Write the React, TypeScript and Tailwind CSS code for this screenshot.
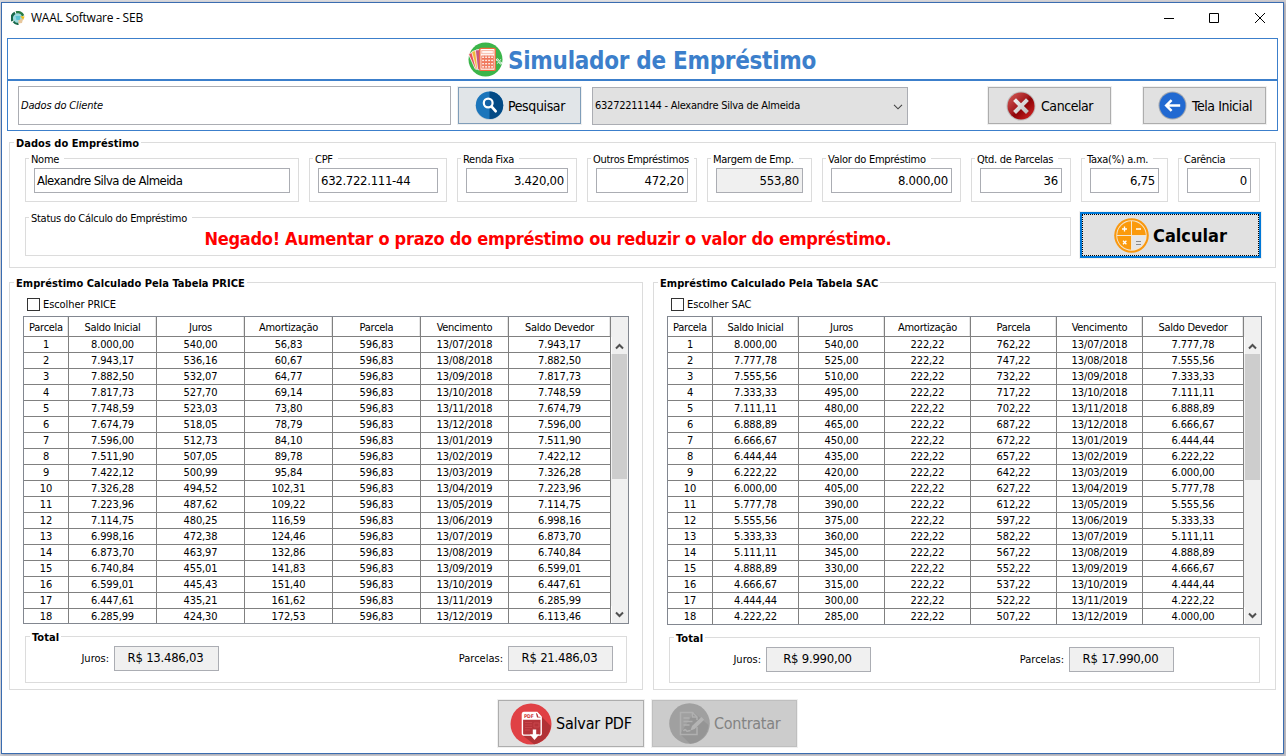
import type { ReactNode } from 'react';

type Row = string[];

const HEADERS = ['Parcela', 'Saldo Inicial', 'Juros', 'Amortização', 'Parcela', 'Vencimento', 'Saldo Devedor'];

const PRICE_BALANCES = [
  '8.000,00', '7.943,17', '7.882,50', '7.817,73', '7.748,59', '7.674,79', '7.596,00', '7.511,90', '7.422,12', '7.326,28',
  '7.223,96', '7.114,75', '6.998,16', '6.873,70', '6.740,84', '6.599,01', '6.447,61', '6.285,99', '6.113,46',
];
const PRICE_INTEREST = [
  '540,00', '536,16', '532,07', '527,70', '523,03', '518,05', '512,73', '507,05', '500,99',
  '494,52', '487,62', '480,25', '472,38', '463,97', '455,01', '445,43', '435,21', '424,30',
];
const PRICE_AMORTIZATION = [
  '56,83', '60,67', '64,77', '69,14', '73,80', '78,79', '84,10', '89,78', '95,84',
  '102,31', '109,22', '116,59', '124,46', '132,86', '141,83', '151,40', '161,62', '172,53',
];
const SAC_BALANCES = [
  '8.000,00', '7.777,78', '7.555,56', '7.333,33', '7.111,11', '6.888,89', '6.666,67', '6.444,44', '6.222,22', '6.000,00',
  '5.777,78', '5.555,56', '5.333,33', '5.111,11', '4.888,89', '4.666,67', '4.444,44', '4.222,22', '4.000,00',
];

function dueDate(index: number): string {
  const month = 6 + index;
  return `13/${String((month % 12) + 1).padStart(2, '0')}/${2018 + Math.floor(month / 12)}`;
}

const priceRows: Row[] = PRICE_INTEREST.map((interest, i) => [
  String(i + 1), PRICE_BALANCES[i], interest, PRICE_AMORTIZATION[i], '596,83', dueDate(i), PRICE_BALANCES[i + 1],
]);

const sacRows: Row[] = PRICE_INTEREST.map((_, i) => [
  String(i + 1), SAC_BALANCES[i], `${540 - 15 * i},00`, '222,22', `${762 - 15 * i},22`, dueDate(i), SAC_BALANCES[i + 1],
]);

function Group({ title, bold, className, children }: { title: string; bold?: boolean; className: string; children?: ReactNode }) {
  return (
    <div className={`relative shrink-0 border border-[#dcdcdc] ${className}`}>
      <span
        className={`absolute top-[-6px] bg-white px-[2px] text-[11px] leading-[14px] whitespace-nowrap ${
          bold ? 'left-[4px] font-bold tracking-[0.04px]' : 'left-[3px] pr-[5px] tracking-[-0.28px]'
        }`}
      >
        {title}
      </span>
      {children}
    </div>
  );
}

function Field({ title, value, className, left, disabled }: { title: string; value: string; className: string; left?: boolean; disabled?: boolean }) {
  return (
    <Group title={title} className={`h-[44px] px-[8px] pt-[9px] ${className}`}>
      <div
        className={`relative flex h-[25px] items-center border border-[#abadb3] text-[13px] whitespace-nowrap ${
          disabled ? 'bg-[#f0f0f0]' : 'bg-white'
        } ${left ? 'justify-start pl-[2px]' : 'justify-end pr-[3px] tracking-[-0.25px]'}`}
      >
        {value}
      </div>
    </Group>
  );
}

function ScrollBar({ thumb }: { thumb: string }) {
  return (
    <div className="flex w-[17px] shrink-0 flex-col items-center bg-[#f0f0f0]">
      <div className="h-[20px] w-full shrink-0" />
      <div className="flex h-[17px] w-full shrink-0 items-center justify-center border-l border-white pr-[2px] pt-px">
        <svg width="9" height="7" viewBox="0 0 9 7" fill="none" stroke="#505050" strokeWidth="2">
          <path d="M1 5.5 4.5 2 8 5.5" />
        </svg>
      </div>
      <div className={`w-[15px] shrink-0 bg-[#cdcdcd] ${thumb}`} />
      <div className="flex-1" />
      <div className="flex h-[17px] w-full shrink-0 items-center justify-center border-l border-white pr-[2px]">
        <svg width="9" height="7" viewBox="0 0 9 7" fill="none" stroke="#505050" strokeWidth="2">
          <path d="M1 1.5 4.5 5 8 1.5" />
        </svg>
      </div>
    </div>
  );
}

function LoanTable({ rows, columns, className, thumb }: { rows: Row[]; columns: string; className: string; thumb: string }) {
  return (
    <div className={`flex shrink-0 overflow-hidden border border-[#828790] text-[11px] ${className}`}>
      <div className="shrink-0">
        <div className={`grid h-[20px] ${columns}`}>
          {HEADERS.map((h, i) => (
            <div
              key={i}
              className="flex items-center justify-center border-r border-b border-[#808080] pt-[3px] leading-[16px] tracking-[-0.27px] whitespace-nowrap shadow-[inset_-1px_0_0_#e5e5e5]"
            >
              {h}
            </div>
          ))}
        </div>
        {rows.map((row) => (
          <div key={row[0]} className={`grid h-[16px] ${columns}`}>
            {row.map((cell, i) => (
              <div key={i} className="flex items-center justify-center border-r border-b border-[#808080] leading-[15px] tracking-[-0.12px]">
                {cell}
              </div>
            ))}
          </div>
        ))}
      </div>
      <ScrollBar thumb={thumb} />
    </div>
  );
}

function CheckBox({ label }: { label: string }) {
  return (
    <div className="ml-[17px] flex h-[13px] items-center gap-[3px] text-[11px] tracking-[-0.08px]">
      <span className="h-[13px] w-[13px] border border-[#333]" />
      <span className="leading-[13px]">{label}</span>
    </div>
  );
}

function TotalValue({ label, value, labelWidth }: { label: string; value: string; labelWidth: string }) {
  return (
    <>
      <span className={`pt-[2px] pr-[5px] text-right text-[11px] ${labelWidth}`}>{label}</span>
      <span className="flex h-[25px] w-[105px] shrink-0 items-center justify-center border border-[#abadb3] bg-[#f0f0f0] pr-[2px] pb-px text-[13px] tracking-[-0.25px] whitespace-nowrap">
        {value}
      </span>
    </>
  );
}

function Button({ className, icon, children }: { className: string; icon: ReactNode; children: ReactNode }) {
  return (
    <button className={`flex shrink-0 items-center border whitespace-nowrap shadow-[0_0_0_1px_#f0f0f0] ${className}`}>
      {icon}
      {children}
    </button>
  );
}

const AppIcon = () => (
  <svg width="14" height="14" viewBox="0 0 14 14">
    <circle cx="7" cy="7" r="5" fill="#9adbe0" />
    <path d="M1.4 10A6 6 0 0 1 4 1.8" fill="none" stroke="#17694a" strokeWidth="2.6" />
    <path d="M5 1.4c3-1 6 .6 7.2 3.4" fill="none" stroke="#2b7d45" strokeWidth="2.4" />
    <path d="M2.5 10.5c1.2 1.8 3 2.6 5 2.3" fill="none" stroke="#17694a" strokeWidth="2.2" />
    <path d="M9 5 13.6 5.4 12.2 9z" fill="#eebc1c" />
    <path d="M7.5 8.5 12 7.8 11 12 7.4 12.6z" fill="#e8c79c" />
    <path d="M4.5 5h5l-.8 4H5.4z" fill="#5cc5d2" />
  </svg>
);

const LoanIcon = () => (
  <svg width="35" height="35" viewBox="0 0 35 35" className="shrink-0">
    <circle cx="17.5" cy="17.5" r="17" fill="#3bb54a" />
    <g stroke="#fff" strokeWidth=".7">
      <rect x="3.6" y="9.5" width="9" height="17" rx="1" fill="#e5505c" transform="rotate(-24 8 18)" />
      <rect x="6" y="8.2" width="8" height="18.5" rx="1" fill="#f0b93a" transform="rotate(-15 10 18)" />
      <rect x="8.6" y="7.6" width="6" height="20" rx="1" fill="#c9577e" transform="rotate(-7 12 18)" />
    </g>
    <rect x="11.8" y="6.4" width="15.4" height="22" rx="1.2" fill="#fff" stroke="#f26a3d" strokeWidth="1.4" />
    <rect x="13.8" y="8.4" width="11.4" height="3.4" fill="#fff3ee" stroke="#f5a08a" strokeWidth=".7" />
    <g fill="#fff" stroke="#ee6a4c" strokeWidth=".9">
      {[0, 1, 2, 3].map((r) =>
        [0, 1, 2, 3].map((c) => <rect key={`${r}${c}`} x={13.8 + c * 3} y={14 + r * 3.2} width="2.5" height="2.5" />),
      )}
    </g>
    <g fill="none" stroke="#fff" strokeWidth="1">
      <circle cx="29.4" cy="17.8" r="1" />
      <circle cx="32.6" cy="21" r="1" />
      <path d="m29.3 21.6 3.4-4.2" />
    </g>
  </svg>
);

const SearchIcon = () => (
  <svg width="29" height="29" viewBox="0 0 29 29" className="shrink-0">
    <circle cx="14.5" cy="15" r="13.8" fill="#9fb2c2" opacity=".6" />
    <circle cx="14.5" cy="14.2" r="13.7" fill="#1b75bb" />
    <path d="M14.5.5a13.7 13.7 0 0 1 0 27.4z" fill="#034a85" />
    <circle cx="13.2" cy="12" r="4.4" fill="#1461a4" stroke="#fff" strokeWidth="2.2" />
    <path d="m16.6 15.6 4 4.6" stroke="#fff" strokeWidth="2.8" strokeLinecap="round" />
  </svg>
);

const CancelIcon = () => (
  <svg width="30" height="30" viewBox="0 0 30 30" className="shrink-0">
    <defs>
      <linearGradient id="cancelFill" x1="0" y1="0" x2="1" y2="1">
        <stop offset="0" stopColor="#d8605c" />
        <stop offset=".45" stopColor="#a51c20" />
        <stop offset=".55" stopColor="#8c0306" />
        <stop offset="1" stopColor="#dc2a2a" />
      </linearGradient>
      <linearGradient id="cancelCross" x1="0" y1="0" x2="1" y2="1">
        <stop offset="0" stopColor="#f6f6f6" />
        <stop offset="1" stopColor="#b8b8b8" />
      </linearGradient>
    </defs>
    <circle cx="15" cy="15" r="14.5" fill="#bdbdbd" />
    <circle cx="15" cy="15" r="13.5" fill="url(#cancelFill)" />
    <path d="m10 7.2 5 5 5-5 2.9 2.9-5 5 5 5-2.9 2.9-5-5-5 5-2.9-2.9 5-5-5-5z" fill="url(#cancelCross)" />
  </svg>
);

const BackIcon = () => (
  <svg width="29" height="29" viewBox="0 0 29 29" className="shrink-0">
    <circle cx="14.5" cy="14.5" r="14" fill="#a3a8b0" />
    <circle cx="14.5" cy="14.5" r="13" fill="#2169d1" />
    <path d="M22.2 14.5H8.4M13.6 9.2l-5.4 5.3 5.4 5.3" fill="none" stroke="#fff" strokeWidth="2.5" />
  </svg>
);

const CalcIcon = () => (
  <svg width="35" height="35" viewBox="0 0 35 35" className="shrink-0">
    <circle cx="17.5" cy="17.5" r="17.3" fill="#f9980f" />
    <circle cx="17.5" cy="17.5" r="15.2" fill="#f4e6d0" />
    <path d="M17 17H3.2A14.3 14.3 0 0 1 17 3.2z" fill="#fb9a0c" />
    <path d="M18 17V3.2A14.3 14.3 0 0 1 31.8 17z" fill="#fb9a0c" />
    <path d="M17 18v13.8A14.3 14.3 0 0 1 3.2 18z" fill="#fb9a0c" />
    <path d="M18 18h13.8A14.3 14.3 0 0 1 18 31.8z" fill="#e6e6e6" />
    <g stroke="#fff" strokeWidth="1.3">
      <path d="M10.5 8.5v5M8 11h5M22 11h5M9 22.8l3.4 3.4M12.4 22.8 9 26.2" />
      <path d="M22 23.5h5M22 26.5h5" stroke="#8a8a8a" strokeWidth="1" />
    </g>
  </svg>
);

const PdfIcon = () => (
  <svg width="42" height="42" viewBox="0 0 42 42" className="shrink-0">
    <circle cx="21" cy="21" r="20.5" fill="#e04145" />
    <path d="M31 13 40.8 23A20.5 20.5 0 0 1 24 41.2L12 32z" fill="#b13236" />
    <path
      d="M14 9.5h13l4.2 4.6v16.4a1.6 1.6 0 0 1-1.6 1.6H14a1.6 1.6 0 0 1-1.6-1.6V11a1.5 1.5 0 0 1 1.6-1.5z"
      fill="#b5343a"
      stroke="#fff"
      strokeWidth="1.4"
    />
    <path d="M12.5 9.5h13.3l1.2 5H31v2.2H12.5z" fill="#fff" />
    <path d="m27.3 9.3 4 4.5h-3.1z" fill="#fff" />
    <text x="14" y="14.9" fontSize="5" fontWeight="bold" fill="#d23c40">PDF</text>
    <path d="M15 19.5h7M15 22h7M15 24.5h7M15 27h5M24 20h5v4h-5z" stroke="#c8444a" strokeWidth="1" fill="none" />
    <path d="M22.8 26.5h3.4v5h3L24.5 37l-4.7-5.5h3z" fill="#fff" />
  </svg>
);

const ContractIcon = () => (
  <svg width="41" height="41" viewBox="0 0 41 41" className="shrink-0">
    <circle cx="20.5" cy="20.5" r="20.3" fill="#a0a0a0" />
    <path d="M25 9.5 39.5 22A20.3 20.3 0 0 1 21 40.8L11 31z" fill="#959595" />
    <g fill="none" stroke="#b0b0b0" strokeWidth="1.5">
      <path d="M28 24v7.5H11.5v-22h12L28 14v3" />
      <path d="M23.5 9.5V14H28M14.5 15h6M14.5 18.5h9M14.5 22h6M14.5 28c1.5-2.5 2.5-1 3 0s2-.5 4-.5" />
    </g>
    <path d="m21.5 27.5 1.5-4.4L32.5 14l2.6 2.7-9.5 9.4z" fill="#b4b4b4" />
  </svg>
);

export default function App() {
  return (
    <div className="h-[756px] w-[1286px] overflow-hidden bg-[linear-gradient(to_right,#d9d9de,#e4e4e7_50%,#cfcdd2)] pt-[2px] pl-px font-['DejaVu_Sans_Condensed','DejaVu_Sans',sans-serif] text-black">
      <div className="flex h-[752px] w-[1283px] flex-col border border-[#3a6cb0] bg-white shadow-[1px_1px_3px_#9a9aa2]">
        {/* Title bar */}
        <div className="flex h-[35px] shrink-0 items-center pr-[18px] pb-[5px] pl-[9px]">
          <AppIcon />
          <span className="ml-[6px] flex-1 font-['Open_Sans','Noto_Sans',sans-serif] text-[12px] tracking-[-0.24px]">WAAL Software - SEB</span>
          <svg width="101" height="12" viewBox="0 0 101 12" fill="none" stroke="#000" strokeWidth="1">
            <path d="M0 6.5h10M45.5 1.5h9v9h-9zM91 1l10 10M101 1 91 11" />
          </svg>
        </div>

        {/* Header and client search */}
        <div className="ml-[5px] h-[93px] w-[1271px] shrink-0 border border-[#3c7fcb]">
          <div className="flex h-[42px] items-center border-b-2 border-[#3c7fcb] pl-[460px]">
            <LoanIcon />
            <h1 className="ml-[5px] pt-[3px] text-[24px] leading-[30px] font-bold tracking-[-0.295px] whitespace-nowrap text-[#3c7fcb]">
              Simulador de Empréstimo
            </h1>
          </div>
          <div className="flex pt-[5px] pl-[10px]">
            <div className="flex h-[39px] w-[433px] items-center border border-[#abadb3] pt-px pl-[2px] text-[11px] tracking-[-0.16px] italic">
              Dados do Cliente
            </div>
            <Button className="mt-px ml-[7px] h-[37px] w-[123px] border-[#7f9db9] bg-[#e1e5e8] pl-[16px] text-[14px] tracking-[-0.37px]" icon={<SearchIcon />}>
              <span className="ml-[4px] pt-[2px]">Pesquisar</span>
            </Button>
            <div className="mt-px ml-[11px] flex h-[38px] w-[316px] items-center justify-between border border-[#abadb3] bg-[#e1e1e1] pt-px pr-[4px] pl-[2px] text-[11px] tracking-[-0.245px]">
              <span>63272211144 - Alexandre Silva de Almeida</span>
              <svg width="10" height="6" viewBox="0 0 10 6" fill="none" stroke="#444" strokeWidth="1.1">
                <path d="M1 .8 5 4.8 9 .8" />
              </svg>
            </div>
            <Button className="mt-px ml-[80px] h-[37px] w-[123px] border-[#adadad] bg-[#e1e1e1] pl-[17px] text-[14px] tracking-[-0.44px]" icon={<CancelIcon />}>
              <span className="ml-[5px] pt-[2px]">Cancelar</span>
            </Button>
            <Button className="mt-px ml-[32px] h-[37px] w-[123px] border-[#adadad] bg-[#e1e1e1] pl-[14px] text-[14px] tracking-[-0.42px]" icon={<BackIcon />}>
              <span className="ml-[5px] pt-[2px]">Tela Inicial</span>
            </Button>
          </div>
        </div>

        {/* Loan data */}
        <Group title="Dados do Empréstimo" bold className="mt-[11px] ml-[7px] h-[126px] w-[1267px] pt-[15px] pl-[15px]">
          <div className="flex gap-[10px]">
            <Field title="Nome" value="Alexandre Silva de Almeida" left className="w-[274px] tracking-[-0.58px]" />
            <Field title="CPF" value="632.722.111-44" left className="w-[138px] tracking-[-0.3px]" />
            <Field title="Renda Fixa" value="3.420,00" className="w-[120px]" />
            <Field title="Outros Empréstimos" value="472,20" className="w-[110px]" />
            <Field title="Margem de Emp." value="553,80" disabled className="w-[105px]" />
            <Field title="Valor do Empréstimo" value="8.000,00" className="w-[139px]" />
            <Field title="Qtd. de Parcelas" value="36" className="w-[100px]" />
            <Field title="Taxa(%) a.m." value="6,75" className="w-[87px]" />
            <Field title="Carência" value="0" className="w-[82px]" />
          </div>
          <div className="mt-[10px] flex gap-[9px]">
            <Group title="Status do Cálculo do Empréstimo" className="mt-[5px] flex h-[39px] w-[1046px] items-center justify-center pt-[3px]">
              <span className="text-[18px] font-bold tracking-[-0.275px] whitespace-nowrap text-[#ff0000]">
                Negado! Aumentar o prazo do empréstimo ou reduzir o valor do empréstimo.
              </span>
            </Group>
            <button className="h-[46px] w-[181px] shrink-0 border-2 border-[#0078d7] bg-[#e1e1e1] shadow-[0_0_0_1px_#f0f0f0]">
              <span className="flex h-full w-full items-center border border-dotted border-black pl-[31px] text-[18px] font-bold">
                <CalcIcon />
                <span className="ml-[4px]">Calcular</span>
              </span>
            </button>
          </div>
        </Group>

        {/* Amortization tables */}
        <div className="mt-[14px] ml-[7px] flex gap-[10px]">
          <Group title="Empréstimo Calculado Pela Tabela PRICE" bold className="h-[408px] w-[634px] pt-[15px]">
            <CheckBox label="Escolher PRICE" />
            <LoanTable rows={priceRows} columns="grid-cols-[45px_repeat(5,88px)_102px]" className="mt-[5px] ml-[13px] h-[308px] w-[606px]" thumb="h-[125px]" />
            <Group title="Total" bold className="mt-[12px] ml-[15px] flex h-[47px] w-[602px] items-start pt-[9px]">
              <div className="flex items-center">
                <TotalValue label="Juros:" value="R$ 13.486,03" labelWidth="w-[88px]" />
                <TotalValue label="Parcelas:" value="R$ 21.486,03" labelWidth="w-[289px]" />
              </div>
            </Group>
          </Group>
          <Group title="Empréstimo Calculado Pela Tabela SAC" bold className="h-[408px] w-[623px] pt-[15px]">
            <CheckBox label="Escolher SAC" />
            <LoanTable rows={sacRows} columns="grid-cols-[45px_repeat(5,86px)_101px]" className="mt-[5px] ml-[13px] h-[309px] w-[595px]" thumb="h-[126px]" />
            <Group title="Total" bold className="mt-[12px] ml-[15px] flex h-[46px] w-[591px] items-start pt-[9px]">
              <div className="flex items-center">
                <TotalValue label="Juros:" value="R$ 9.990,00" labelWidth="w-[96px]" />
                <TotalValue label="Parcelas:" value="R$ 17.990,00" labelWidth="w-[198px]" />
              </div>
            </Group>
          </Group>
        </div>

        {/* Actions */}
        <div className="mt-[10px] flex gap-[8px] pl-[496px]">
          <Button className="h-[47px] w-[146px] border-[#adadad] bg-[#e1e1e1] pl-[11px] text-[16px] tracking-[-0.2px]" icon={<PdfIcon />}>
            <span className="ml-[4px]">Salvar PDF</span>
          </Button>
          <Button className="h-[47px] w-[145px] border-[#bfbfbf] bg-[#cccccc] pl-[16px] text-[16px] tracking-[-0.25px] text-[#838383]" icon={<ContractIcon />}>
            <span className="ml-[4px]">Contratar</span>
          </Button>
        </div>
      </div>
    </div>
  );
}
